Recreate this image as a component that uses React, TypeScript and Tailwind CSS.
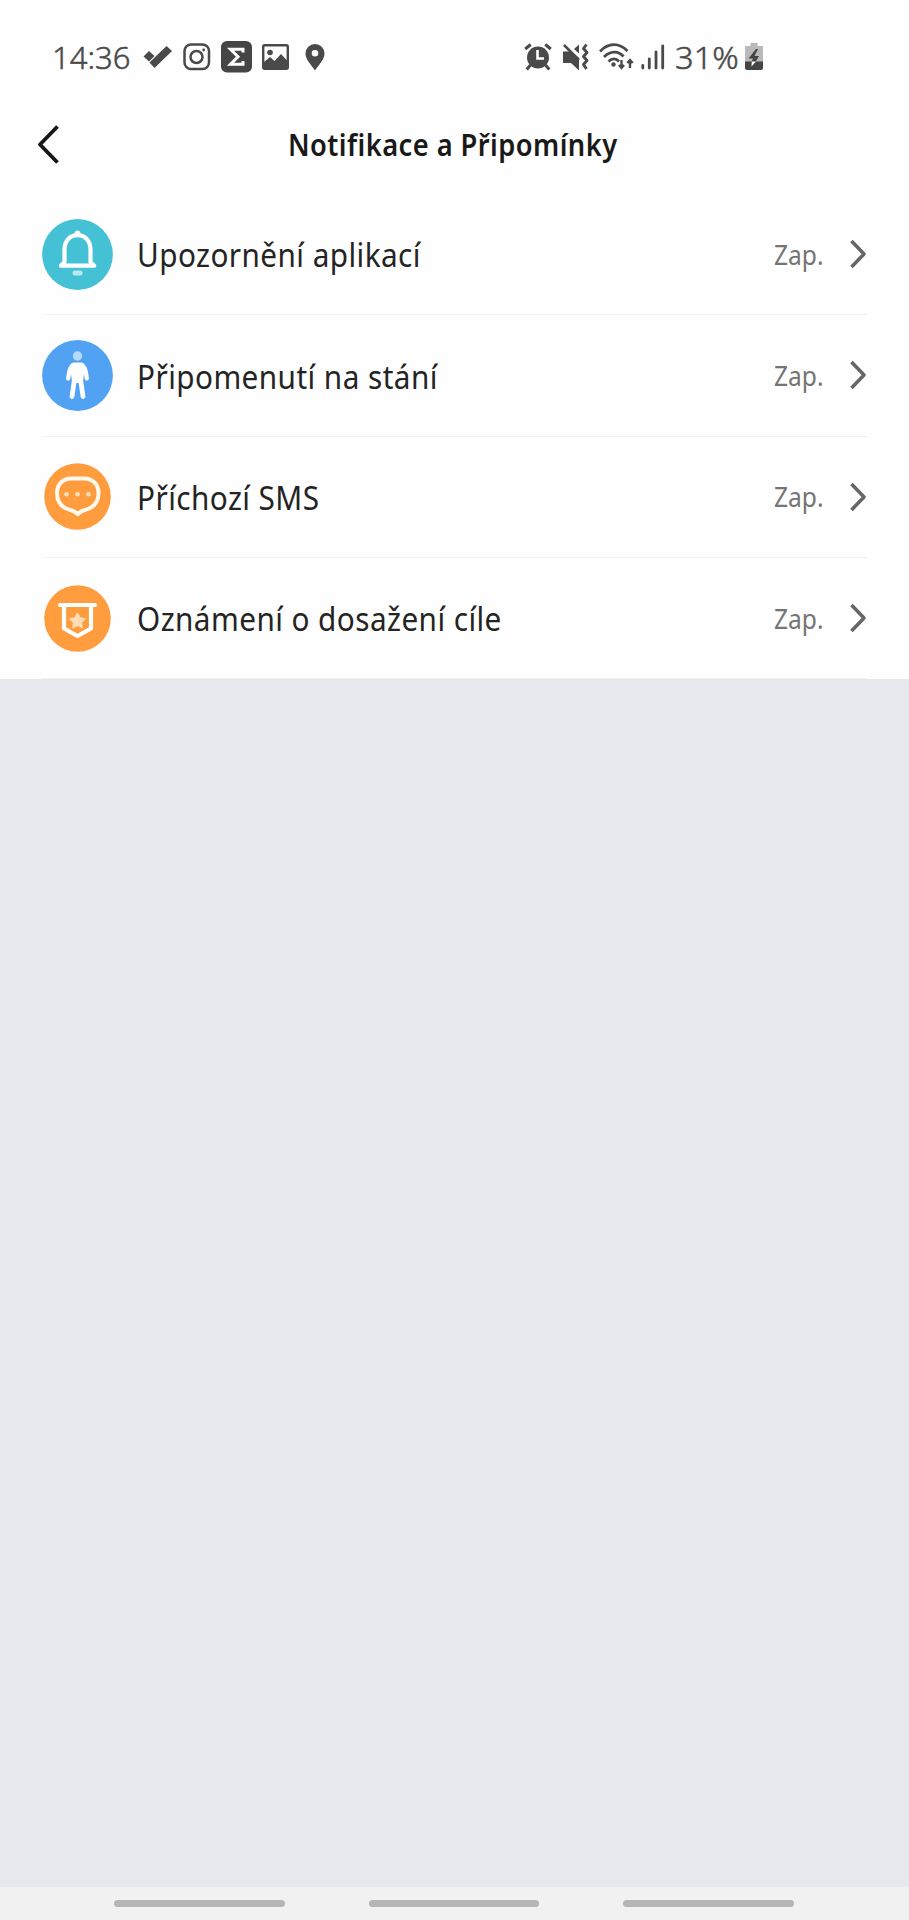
import type { ReactNode } from "react";

type Reminder = {
  label: string;
  icon: ReactNode;
};

function BellIcon() {
  return (
    <svg viewBox="0 0 71 71" className="h-[71px] w-[71px]" fill="none">
      <circle cx="35.5" cy="35.5" r="35.4" fill="#45c1d6" />
      <path
        d="M22.500 43V30.500c0-8.500 5.500-14.300 13-14.300s13 5.800 13 14.300V43l3.600 3.700H18.900z"
        stroke="#fff"
        strokeWidth="4.200"
        strokeLinejoin="round"
      />
      <circle cx="35.500" cy="14.300" r="2.800" fill="#fff" />
      <rect x="30.500" y="51.500" width="10" height="5" rx="2.500" fill="#b9e8ef" />
    </svg>
  );
}

function StandIcon() {
  return (
    <svg viewBox="0 0 71 71" className="h-[71px] w-[71px]" fill="none">
      <circle cx="35.500" cy="35.500" r="35.400" fill="#52a2f4" />
      <circle cx="35.500" cy="16" r="4.700" fill="#b5dafb" />
      <path d="M32.500 22.500h6c2.800 0 4.500 1.500 4.500 4.500l-2 14-3.500 2h-4l-3.500-2-2-14c0-3 1.700-4.500 4.500-4.500z" fill="#fff" />
      <path
        d="M30.500 25.500C27.500 28 27 32 26.200 38.500M40.500 25.500c3 2.500 3.500 6.500 4.300 13"
        stroke="#fff"
        strokeWidth="4.200"
        strokeLinecap="round"
      />
      <path
        d="m32.500 39-2.500 17.500M38.500 39l2.500 17.500"
        stroke="#fff"
        strokeWidth="4.800"
        strokeLinecap="round"
      />
    </svg>
  );
}

function MessageIcon() {
  return (
    <svg viewBox="0 0 67 67" className="h-[67px] w-[67px]" fill="none">
      <circle cx="33.500" cy="33.500" r="33.300" fill="#ff9d3e" />
      <path
        d="M27 15.500h13.500c8.500 0 14 6.200 14 14.500 0 10-5.500 15.200-14.500 17.200-2.500.6-3.300 1.600-6.200 3.900-2.900-2.300-4.100-3.300-6.600-3.900C18.200 45.200 13 40 13 30c0-8.300 5.500-14.500 14-14.500z"
        stroke="#fff8ed"
        strokeWidth="4"
        strokeLinejoin="round"
      />
      <circle cx="22.500" cy="31.300" r="2.300" fill="#ffe0bd" />
      <circle cx="33.500" cy="31.300" r="2.300" fill="#ffe0bd" />
      <circle cx="44.500" cy="31.300" r="2.300" fill="#ffe0bd" />
    </svg>
  );
}

function GoalIcon() {
  return (
    <svg viewBox="0 0 67 67" className="h-[67px] w-[67px]" fill="none">
      <circle cx="33.500" cy="33.500" r="33.300" fill="#ff9d3e" />
      <path d="M16 20h35" stroke="#fff" strokeWidth="4.200" strokeLinecap="round" />
      <path d="M20 20v23.500l13.500 7.500L47 43.500V20" stroke="#fff" strokeWidth="4.200" strokeLinejoin="round" />
      <path
        d="m33.500 29 2.200 4.300 4.800.7-3.500 3.400.9 4.800-4.400-2.300-4.300 2.300.8-4.800-3.500-3.400 4.800-.7z"
        fill="#ffdcb8"
        stroke="#ffdcb8"
        strokeWidth="2"
        strokeLinejoin="round"
      />
    </svg>
  );
}

const reminders: Reminder[] = [
  { label: "Upozornění aplikací", icon: <BellIcon /> },
  { label: "Připomenutí na stání", icon: <StandIcon /> },
  { label: "Příchozí SMS", icon: <MessageIcon /> },
  { label: "Oznámení o dosažení cíle", icon: <GoalIcon /> },
];

function StatusBar() {
  return (
    <div className="flex h-[112px] items-center pt-px pl-[52px] text-[32px] text-[#4a4a4a]">
      <div className="w-[91px] whitespace-nowrap">
        <span className="inline-block origin-left scale-x-[0.97] font-light [-webkit-text-stroke:0.5px_#4a4a4a]">
          14:36
        </span>
      </div>
      <svg viewBox="0 0 29 24" className="h-6 w-[29px]" fill="currentColor">
        <path d="m.5 11.500 5.500-5.500 5.500 5L6 16.500z" />
        <path d="M6.500 17.500 23.500 1l5.500 5-17.500 17z" />
      </svg>
      <svg viewBox="0 0 28 28" className="ml-[11px] h-7 w-7" fill="none" stroke="currentColor" strokeWidth="2.500">
        <rect x="1.500" y="1.500" width="24.500" height="24.500" rx="6.500" />
        <circle cx="13.500" cy="14" r="6" />
        <circle cx="20.700" cy="7" r="1.400" fill="currentColor" stroke="none" />
      </svg>
      <svg viewBox="0 0 31 32" className="ml-[10px] h-8 w-[31px]">
        <rect width="31" height="31.500" rx="6" fill="#454545" />
        <path d="M22 11.500V8.300H9.500l7.500 7.500-7.500 7.500H22V20" fill="none" stroke="#fff" strokeWidth="3" />
      </svg>
      <svg viewBox="0 0 27 26" className="ml-[10px] h-[26px] w-[27px]">
        <rect x="1.200" y="1.200" width="24.600" height="23.600" rx="1.500" fill="none" stroke="currentColor" strokeWidth="2.400" />
        <circle cx="8" cy="8.500" r="2.800" fill="currentColor" />
        <path d="m2 18 6-5 4.500 4L19 10l6.500 7v7.500H2z" fill="currentColor" />
      </svg>
      <svg viewBox="0 0 20 28" className="ml-[16px] h-7 w-5" fill="currentColor">
        <path
          fillRule="evenodd"
          d="M10 1a9.500 9.500 0 0 1 9.500 9.500C19.500 16.500 14 21.500 10 27.500 6 21.500.5 16.500.5 10.500A9.500 9.500 0 0 1 10 1zm0 6a3.300 3.300 0 1 0 0 6.600A3.300 3.300 0 0 0 10 7z"
        />
      </svg>

      <svg viewBox="0 0 28 28" className="ml-[199px] h-7 w-7" fill="none" stroke="currentColor">
        <circle cx="14" cy="14.500" r="11" fill="currentColor" stroke="none" />
        <path d="M1.200 6 6.700 1.500M26.800 6l-5.500-4.500M6.500 22l-3.800 4.500M21.500 22l3.800 4.500" strokeWidth="3" />
        <path d="M13.500 7v8.500h6.500" stroke="#fff" strokeWidth="2.600" />
      </svg>
      <svg viewBox="0 0 26 28" className="ml-[11px] h-7 w-[26px]" fill="none" stroke="currentColor">
        <path d="M0 8.500h8l8 6.500v12.500L8 20H0zM11 6l5-4.500v9z" fill="currentColor" stroke="none" />
        <path d="m1 2 15 15" strokeWidth="2.500" />
        <path d="m23.500 1.500-3 4 3.500 4-3.500 4 3.500 4-3.500 4 3 4.500" strokeWidth="2.900" strokeLinejoin="round" />
      </svg>
      <svg viewBox="0 0 36 28" className="ml-[10px] h-7 w-9" fill="none" stroke="currentColor" strokeWidth="2.800">
        <path d="M1 8.500C9.500-.5 20-.5 28.500 8M5 14c6-6.500 14.500-6.500 19.500-.5M9.500 18.500c3.500-3.600 7.500-3.600 10.500 0" />
        <circle cx="14.500" cy="21.500" r="2.200" fill="currentColor" stroke="none" />
        <path d="M22.500 17v7.500M20 22l2.500 3 2.500-3M31 25v-8m-2.700 3 2.700-3 2.700 3" strokeWidth="2.400" />
      </svg>
      <svg viewBox="0 0 24 26" className="ml-[6px] h-[26px] w-6" fill="none" stroke="currentColor" strokeWidth="2.800" strokeLinecap="round">
        <path d="M1.800 21.500v2.500M8.300 15v9M15 8v16M21.700 2v22" />
      </svg>
      <div className="ml-[10px] w-[70px] whitespace-nowrap">
        <span className="inline-block origin-left scale-x-[1.02] font-light [-webkit-text-stroke:0.5px_#4a4a4a]">
          31%
        </span>
      </div>
      <svg viewBox="0 0 18 28" className="h-7 w-[18px]">
        <path d="M5.500 0h7v3H18v16H0V3h5.500z" fill="#b9b9b9" />
        <path d="M0 18.500h18V25a2 2 0 0 1-2 2H2a2 2 0 0 1-2-2z" fill="#454545" />
        <path d="m11 6-7.500 9.500H8L6.500 19h4l3.500-6H9.500L13 6z" fill="#454545" />
        <path d="M6.800 18.500H11l-4.500 5z" fill="#fff" />
      </svg>
    </div>
  );
}

function ReminderRow({ label, icon }: Reminder) {
  return (
    <li className="mx-[42px] flex h-[121.3px] items-center border-b border-[#f2f2f3]">
      <div className="grid w-[71px] place-items-center">{icon}</div>
      <div className="ml-[24px] flex-1 pt-[2px] whitespace-nowrap">
        <span className="inline-block origin-left scale-x-[0.9] text-[33px] tracking-[0.5px] text-[#242424]">
          {label}
        </span>
      </div>
      <div className="w-[76px] pt-[2px] whitespace-nowrap">
        <span className="inline-block origin-left scale-x-[0.91] text-[27px] text-[#757575]">Zap.</span>
      </div>
      <svg viewBox="0 0 17 30" className="h-[30px] w-[17px]" fill="none" stroke="#666" strokeWidth="3.500">
        <path d="M1.500 2 14 15 1.500 28" strokeLinejoin="round" />
      </svg>
    </li>
  );
}

export default function App() {
  return (
    <div className="flex h-[1920px] w-[909px] flex-col overflow-hidden bg-[#e7e8ed] font-['Noto_Sans',sans-serif]">
      <div className="h-[679px] bg-[#fefefe]">
        <StatusBar />
        <header className="flex h-[82px] items-start pl-[37px]">
          <button type="button" aria-label="Zpět" className="mt-[13px]">
            <svg viewBox="0 0 22 40" className="h-10 w-[22px]" fill="none" stroke="#161616" strokeWidth="3.800">
              <path d="M20.500 1.500 3 19.500l17.500 18" strokeLinejoin="round" />
            </svg>
          </button>
          <h1 className="ml-[229px] mt-[10px] whitespace-nowrap text-[31px] leading-[44px] font-semibold text-[#191919]">
            <span className="inline-block origin-left scale-x-[0.88] tracking-[0.5px] [font-variant-ligatures:none]">
              Notifikace a Připomínky
            </span>
          </h1>
        </header>
        <ul>
          {reminders.map((reminder) => (
            <ReminderRow key={reminder.label} {...reminder} />
          ))}
        </ul>
      </div>
      <nav className="mt-auto flex h-[33px] gap-[84px] bg-[#f1f1f1] pl-[114px] pt-[13px]">
        <button type="button" aria-label="Poslední" className="h-[7px] w-[170.5px] rounded-full bg-[#b5b5b5]" />
        <button type="button" aria-label="Domů" className="h-[7px] w-[170.5px] rounded-full bg-[#b5b5b5]" />
        <button type="button" aria-label="Zpět" className="h-[7px] w-[170.5px] rounded-full bg-[#b5b5b5]" />
      </nav>
    </div>
  );
}
